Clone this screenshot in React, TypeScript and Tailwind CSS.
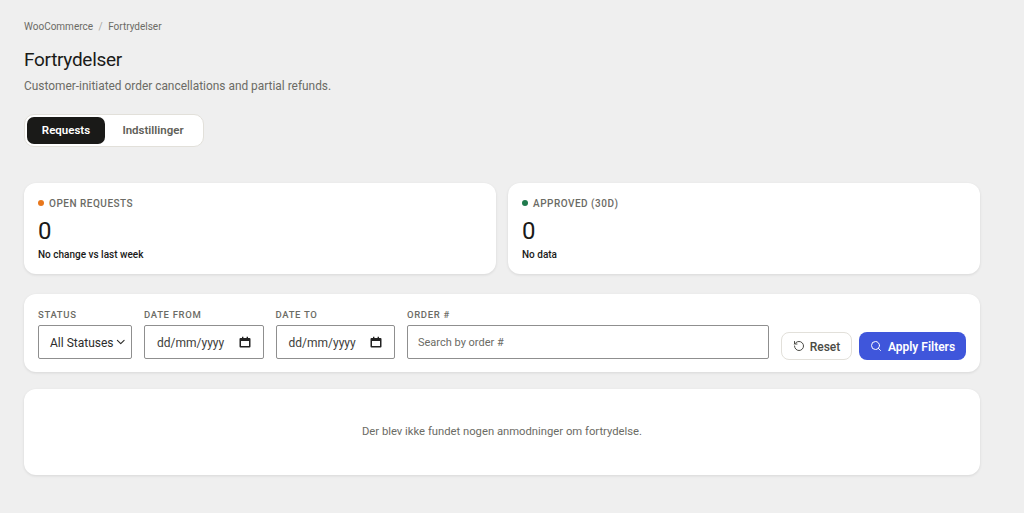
import { RotateCcw, Search, ChevronDown } from "lucide-react";

function CalendarGlyph() {
  return (
    <svg width="12" height="12" viewBox="0 0 12 12" className="shrink-0">
      <path d="M1.5 2h9a1 1 0 0 1 1 1v7.5a1 1 0 0 1-1 1h-9a1 1 0 0 1-1-1V3a1 1 0 0 1 1-1zM2 5v5h8V5z M3 .8h1.4V2H3z M7.6 .8H9V2H7.6z" fill="#222" fillRule="evenodd" />
    </svg>
  );
}

function Label({ children }: { children: React.ReactNode }) {
  return <div className="text-[9.5px] leading-[14px] tracking-[0.07em] text-[#6b6b65] font-medium mt-[2px] mb-[3px] whitespace-nowrap">{children}</div>;
}

function DateField({ label }: { label: string }) {
  return (
    <div className="w-[119.5px]">
      <Label>{label}</Label>
      <div className="h-[34px] border border-[#8f8f8f] rounded-[2px] bg-white flex items-center justify-between pl-[12px] pr-[12px] text-[12px] text-[#3d3d3a]">
        <span className="pt-[1px]">dd/mm/yyyy</span>
        <CalendarGlyph />
      </div>
    </div>
  );
}

function Stat({ dot, label, sub }: { dot: string; label: string; sub: string }) {
  return (
    <div className="bg-white rounded-[12px] shadow-[0_1px_3px_rgba(0,0,0,0.1)] h-[91px] pt-[12px] px-[14px]">
      <div className="flex items-center gap-[5px] h-[16px]">
        <span className={`w-[6px] h-[6px] rounded-full ${dot}`} />
        <span className="text-[10px] tracking-[0.05em] text-[#6b6b65] font-medium">{label}</span>
      </div>
      <div className="text-[24px] leading-[30px] text-[#1a1a18] mt-[5px]">0</div>
      <div className="text-[10px] leading-[14px] text-[#1a1a18] font-medium mt-[2px]">{sub}</div>
    </div>
  );
}

export default function App() {
  return (
    <div className="min-h-[513px] bg-[#efefef] pl-[24px] pr-[44px] pt-[19px] font-['Roboto','Noto_Sans',sans-serif] overflow-hidden">
      <div className="flex gap-[5.5px] text-[10px] leading-[15px] text-[#6b6b65]">
        <span>WooCommerce</span>
        <span className="text-[#a8a8a2]">/</span>
        <span>Fortrydelser</span>
      </div>
      <h1 className="text-[19px] tracking-[-0.3px] leading-[28px] text-[#1a1a18] mt-[12px]">Fortrydelser</h1>
      <p className="text-[11.9px] leading-[17px] text-[#6b6b65] mt-[4px]">Customer-initiated order cancellations and partial refunds.</p>

      <div className="flex mt-[19px] h-[33px] w-[180px] bg-white border border-[#e2e0da] rounded-[10px] p-[2px]">
        <div className="w-[78px] bg-[#1a1a18] text-white rounded-[7px] flex items-center justify-center text-[11.5px] font-semibold">Requests</div>
        <div className="flex-1 flex items-center justify-center text-[11.5px] font-semibold text-[#5f5f58]">Indstillinger</div>
      </div>

      <div className="grid grid-cols-2 gap-[12px] mt-[36px]">
        <Stat dot="bg-[#e8771c]" label="OPEN REQUESTS" sub="No change vs last week" />
        <Stat dot="bg-[#1f7a4d]" label="APPROVED (30D)" sub="No data" />
      </div>

      <div className="mt-[20px] h-[78px] bg-white rounded-[12px] shadow-[0_1px_3px_rgba(0,0,0,0.1)] pl-[14px] pr-[14px] pt-[12px] flex items-start gap-[12px]">
        <div className="w-[94px]">
          <Label>STATUS</Label>
          <div className="h-[34px] border border-[#8f8f8f] rounded-[2px] bg-white flex items-center pl-[11px] pr-[4px] justify-between text-[12px] text-[#2c2c2a]">
            <span className="whitespace-nowrap pt-[1px]">All Statuses</span>
            <ChevronDown size={14} strokeWidth={2} />
          </div>
        </div>
        <DateField label="DATE FROM" />
        <DateField label="DATE TO" />
        <div className="flex-1">
          <Label>ORDER #</Label>
          <div className="h-[34px] border border-[#8f8f8f] rounded-[2px] bg-white flex items-center pl-[10px] pt-[2px] text-[11px] text-[#6b6b65]">Search by order #</div>
        </div>
        <div className="flex gap-[7px] mt-[26px]">
          <div className="w-[71px] h-[28px] border border-[#e2e0da] rounded-[8px] flex items-center justify-center gap-[5px] text-[12px] font-medium text-[#4a4a45]">
            <RotateCcw size={12} strokeWidth={2} />
            <span className="pt-[1px]">Reset</span>
          </div>
          <div className="w-[107px] h-[28px] bg-[#3f56db] rounded-[8px] flex items-center justify-center gap-[6px] text-[12px] font-semibold text-white">
            <Search size={12} strokeWidth={2} />
            <span className="pt-[1px]">Apply Filters</span>
          </div>
        </div>
      </div>

      <div className="mt-[17px] h-[86px] bg-white rounded-[12px] shadow-[0_1px_3px_rgba(0,0,0,0.1)] flex items-center justify-center pt-[1px] text-[11.25px] text-[#6b6b65]">
        Der blev ikke fundet nogen anmodninger om fortrydelse.
      </div>
    </div>
  );
}
